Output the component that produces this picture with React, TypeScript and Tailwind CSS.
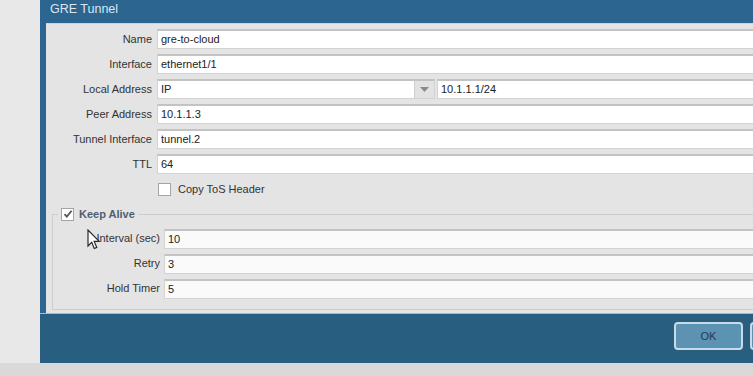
import React from "react";

const font = { fontFamily: '"Liberation Sans", Arial, sans-serif' };

function Field({ value, soft }: { value: string; soft?: boolean }) {
  return (
    <div
      className={`h-[20px] flex-1 min-w-0 border border-[#d3d3d3] border-t-2 border-t-[#c3c3c3] border-r-0 pl-[3px] flex items-center text-[11px] text-[#222] ${
        soft ? "bg-[#fafafa]" : "bg-white"
      }`}
    >
      {value}
    </div>
  );
}

function Row({ label, children, w }: { label: string; children: React.ReactNode; w: string }) {
  return (
    <div className="flex items-center h-[20px]">
      <div className={`${w} shrink-0 text-right text-[11px] text-[#333]`}>{label}</div>
      {children}
    </div>
  );
}

function Check({ checked }: { checked?: boolean }) {
  return (
    <span className="w-[13px] h-[13px] border border-[#a5a5a5] bg-white inline-flex items-center justify-center shrink-0">
      {checked && (
        <svg width="10" height="10" viewBox="0 0 10 10">
          <path d="M1.5 5.2 L3.8 7.6 L8.6 1.8" fill="none" stroke="#555" strokeWidth="1.8" />
        </svg>
      )}
    </span>
  );
}

export default function App() {
  return (
    <div className="w-[753px] h-[376px] overflow-hidden relative bg-[#e8e8e8]" style={font}>
      <div className="ml-[40px] h-[363px] flex flex-col bg-[#2b6590] w-[760px]">
        <div className="h-[23px] shrink-0 pl-[10px] pt-[1px] text-[12.5px] leading-[16px] text-[#dbe6ef]">
          GRE Tunnel
        </div>
        <div className="ml-[6px] h-[290px] shrink-0 bg-[#e4e4e4] border-t border-[#d2d2d2] pt-[5px] flex flex-col">
          <div className="flex flex-col gap-[5px]">
            <Row label="Name" w="w-[111px] pr-[5px]">
              <Field value="gre-to-cloud" />
            </Row>
            <Row label="Interface" w="w-[111px] pr-[5px]">
              <Field value="ethernet1/1" />
            </Row>
            <Row label="Local Address" w="w-[111px] pr-[5px]">
              <div className="w-[278px] h-[20px] shrink-0 flex border border-[#d3d3d3] border-t-2 border-t-[#c3c3c3] bg-white">
                <div className="flex-1 pl-[3px] flex items-center text-[11px] text-[#222]">IP</div>
                <div className="w-[20px] bg-[#e2e2e2] border-l border-[#cfcfcf] flex items-center justify-center">
                  <svg width="9" height="5" viewBox="0 0 9 5">
                    <path d="M0 0 H9 L4.5 5 Z" fill="#8a8a8a" />
                  </svg>
                </div>
              </div>
              <div className="w-[2px] shrink-0" />
              <Field value="10.1.1.1/24" />
            </Row>
            <Row label="Peer Address" w="w-[111px] pr-[5px]">
              <Field value="10.1.1.3" />
            </Row>
            <Row label="Tunnel Interface" w="w-[111px] pr-[5px]">
              <Field value="tunnel.2" />
            </Row>
            <Row label="TTL" w="w-[111px] pr-[5px]">
              <Field value="64" />
            </Row>
          </div>
          <div className="flex items-center gap-[7px] pl-[112px] mt-[9px] h-[13px] text-[11px] text-[#333]">
            <Check />
            <span>Copy ToS Header</span>
          </div>
          <fieldset className="ml-[6px] mt-[10px] border border-[#cdcdcd] border-r-0 h-[104px] pt-[6px]">
            <legend className="ml-[5px] px-[3px] flex items-center gap-[5px] text-[11px] font-bold text-[#4d5e72]">
              <Check checked />
              <span>Keep Alive</span>
            </legend>
            <div className="flex flex-col gap-[5px]">
              <Row label="Interval (sec)" w="w-[111px] pr-[4px]">
                <Field value="10" soft />
              </Row>
              <Row label="Retry" w="w-[111px] pr-[4px]">
                <Field value="3" soft />
              </Row>
              <Row label="Hold Timer" w="w-[111px] pr-[4px]">
                <Field value="5" soft />
              </Row>
            </div>
          </fieldset>
        </div>
        <div className="flex-1 bg-[#285e80] border-t border-[#9fbcd0] pl-[634px] pt-[8px] flex gap-[7px]">
          <button className="w-[69px] h-[28px] rounded-[4px] border-2 border-[#c9dbe6] bg-[#5c93b2] text-[11px] text-[#1f3b52] shrink-0">
            OK
          </button>
          <div className="w-[69px] h-[28px] rounded-[4px] border-2 border-[#c9dbe6] bg-[#5c93b2] shrink-0" />
        </div>
      </div>
      <div className="h-[13px] bg-[#d9d9d9]" />
      <svg className="absolute left-[87px] top-[229px]" width="14" height="21" viewBox="0 0 14 21">
        <path d="M1 1 L1 17 L4.7 13.3 L7.3 19.5 L9.8 18.4 L7.2 12.4 L12.2 12.4 Z" fill="#fff" stroke="#2a2a2a" strokeWidth="1.2" />
      </svg>
    </div>
  );
}
